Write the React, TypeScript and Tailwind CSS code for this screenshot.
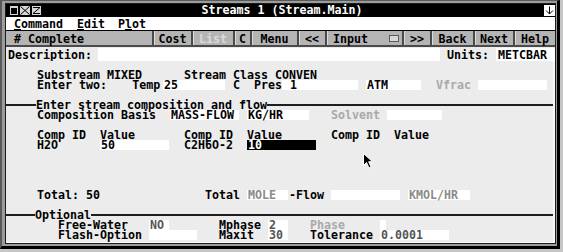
import React from "react";

const CW = 7;

type SegProps = { c: number; children?: React.ReactNode; className?: string };

function Seg({ c, children, className = "" }: SegProps) {
  return (
    <span
      className={`block shrink-0 whitespace-pre leading-[10px] ${className}`}
      style={{ width: c * CW }}
    >
      {children}
    </span>
  );
}

type FieldProps = SegProps & { sel?: boolean };

function Field({ c, children, className = "", sel = false }: FieldProps) {
  return (
    <span
      className={`block h-[10px] shrink-0 whitespace-pre pl-[1px] leading-[10px] ${
        sel ? "bg-black text-white" : "bg-white"
      } ${className}`}
      style={{ width: c * CW - 1, marginRight: 1 }}
    >
      {children}
    </span>
  );
}

function Row({ children }: { children?: React.ReactNode }) {
  return <div className="flex h-[10px] items-center">{children}</div>;
}

function Blank() {
  return <div className="h-[10px]" />;
}

function Sep({ label, lead }: { label: string; lead: string }) {
  return (
    <div className="-ml-[31px] flex h-[10px] items-center">
      <div className={`h-[2px] bg-[#1e1e1e] ${lead}`} />
      <span className="whitespace-pre leading-[10px]">{label}</span>
      <div className="h-[2px] flex-1 bg-[#1e1e1e]" />
    </div>
  );
}

const grey = "text-[#a9a9a9]";
const dim = "text-[#8a8a8a]";
const val = "text-[#555555]";

function TitleBar() {
  return (
    <div className="flex h-[13px] items-center bg-black">
      <div className="flex flex-1 items-center pl-[3px]">
        <div className="flex h-[11px] w-[10px] items-center justify-center border border-black bg-[#d6d6d6]">
          <div className="h-[6px] w-[6px] bg-black" />
        </div>
        <div className="h-[11px] w-[12px] border border-black bg-[#d6d6d6]">
          <svg width="10" height="9" viewBox="0 0 10 9" className="block">
            <path d="M0.5 0.5 L9.5 8.5 M9.5 0.5 L0.5 8.5" stroke="#000" strokeWidth="1" />
          </svg>
        </div>
        <div className="flex h-[11px] w-[11px] items-center justify-center border border-black bg-[#d6d6d6]">
          <svg width="9" height="9" viewBox="0 0 9 9" className="block">
            <path d="M1 1.5 H8 L1 7.5 H8" stroke="#000" strokeWidth="1" fill="none" />
          </svg>
        </div>
      </div>
      <span className="whitespace-pre pt-[1px] leading-none text-white">Streams 1 (Stream.Main)</span>
      <div className="flex flex-1 justify-end">
        <div className="flex h-[11px] w-[11px] items-center justify-center bg-white">
          <svg width="9" height="9" viewBox="0 0 9 9" className="block">
            <path d="M4.5 0.5 V8 M1 4.5 L4.5 8 L8 4.5" stroke="#000" strokeWidth="1" fill="none" />
          </svg>
        </div>
      </div>
    </div>
  );
}

function MenuBar() {
  return (
    <div className="flex h-[13px] items-center bg-white pl-[8px] pt-[2px]">
      <span className="w-[63px] leading-none">
        <span className="underline underline-offset-[1px]">C</span>ommand
      </span>
      <span className="w-[41px] leading-none">
        <span className="underline underline-offset-[1px]">E</span>dit
      </span>
      <span className="leading-none">
        P<span className="underline underline-offset-[1px]">l</span>ot
      </span>
    </div>
  );
}

const buttons = [
  { t: "Cost", w: "w-[39px]" },
  { t: "List", w: "w-[42px]", dis: true },
  { t: "C", w: "w-[17px]" },
  { t: "Menu", w: "w-[47px]" },
  { t: "<<", w: "w-[28px]" },
  { t: "Input", w: "w-[77px]", input: true },
  { t: ">>", w: "w-[28px]" },
  { t: "Back", w: "w-[43px]" },
  { t: "Next", w: "w-[40px]" },
  { t: "Help", w: "w-[42px]" },
];

function Toolbar() {
  return (
    <div className="flex h-[17px] border-t border-b-2 border-t-black border-b-[#4a4a4a] bg-[#b4b4b4]">
      <div className="flex w-[146px] items-center pl-[8px] pt-[3px] leading-none">
        # Complete
      </div>
      {buttons.map((b) => (
        <div
          key={b.t}
          className={`flex h-full items-center border-l-2 border-l-[#4a4a4a] pt-[3px] leading-none shadow-[inset_1px_0_0_#dcdcdc] ${b.w} ${
            b.input ? "justify-between pl-[6px] pr-[3px]" : "justify-center"
          } ${b.dis ? "text-[#dadada]" : ""}`}
        >
          <span>{b.t}</span>
          {b.input && <span className="mb-[2px] block h-[7px] w-[10px] border border-[#5a5a5a] bg-[#d8d8d8]" />}
        </div>
      ))}
    </div>
  );
}

function DescRow() {
  return (
    <div className="flex h-[14px] bg-[#ececec] pt-[1px]">
      <span className="flex w-[92px] items-center pl-[2px] pt-[2px] leading-none">Description:</span>
      <span className="w-[342px] bg-white" />
      <span className="ml-[7px] flex w-[49px] items-center pt-[2px] leading-none">Units:</span>
      <span className="flex flex-1 items-center bg-white pl-[2px] pt-[2px] leading-none">METCBAR</span>
    </div>
  );
}

function Content() {
  return (
    <div className="flex-1 border-r-2 border-b border-r-[#f8f8f8] border-b-[#f8f8f8] bg-[#ececec] pl-[31px] pt-[9px]">
      <Row>
        <Seg c={21}>Substream MIXED</Seg>
        <Seg c={19}>Stream Class CONVEN</Seg>
      </Row>
      <Row>
        <Seg c={13.6}>Enter two:</Seg>
        <Seg c={4.4}>Temp</Seg>
        <Field c={9}>25</Field>
        <Seg c={1} />
        <Seg c={3}>C</Seg>
        <Seg c={4}>Pres</Seg>
        <Field c={11}> 1</Field>
        <Seg c={1} />
        <Field c={8}>ATM</Field>
        <Seg c={2} />
        <Seg c={6} className={grey}>
          Vfrac
        </Seg>
        <Field c={10} />
      </Row>
      <Blank />
      <Sep label="Enter stream composition and flow" lead="w-[30px]" />
      <Row>
        <Seg c={19}>Composition Basis</Seg>
        <Field c={10}>MASS-FLOW</Field>
        <Seg c={1} />
        <Field c={9}>KG/HR</Field>
        <Seg c={3} />
        <Seg c={8} className={grey}>
          Solvent
        </Seg>
        <Field c={8} />
      </Row>
      <Blank />
      <Row>
        <Seg c={9}>Comp ID</Seg>
        <Seg c={12}>Value</Seg>
        <Seg c={9}>Comp ID</Seg>
        <Seg c={12}>Value</Seg>
        <Seg c={9}>Comp ID</Seg>
        <Seg c={5}>Value</Seg>
      </Row>
      <Row>
        <Seg c={9}>H2O</Seg>
        <Field c={10}>50</Field>
        <Seg c={2} />
        <Seg c={9}>C2H6O-2</Seg>
        <Field c={10} sel>
          10
        </Field>
      </Row>
      <Blank />
      <Blank />
      <Blank />
      <Blank />
      <Row>
        <Seg c={24}>Total: 50</Seg>
        <Seg c={6}>Total</Seg>
        <Field c={6} className={dim}>
          MOLE
        </Field>
        <Seg c={6}>-Flow</Seg>
        <Field c={10} />
        <Seg c={1} />
        <Field c={9} className={dim}>
          KMOL/HR
        </Field>
      </Row>
      <Blank />
      <Sep label="Optional" lead="w-[29px]" />
      <Row>
        <Seg c={3} />
        <Seg c={13}>Free-Water</Seg>
        <Field c={3} className={val}>
          NO
        </Field>
        <Seg c={7} />
        <Seg c={7}>Mphase</Seg>
        <Field c={3} className={val}>
          2
        </Field>
        <Seg c={3} />
        <Seg c={10} className={grey}>
          Phase
        </Seg>
        <Field c={1} />
      </Row>
      <Row>
        <Seg c={3} />
        <Seg c={13}>Flash-Option</Seg>
        <Field c={7} />
        <Seg c={3} />
        <Seg c={7}>Maxit</Seg>
        <Field c={3} className={val}>
          30
        </Field>
        <Seg c={3} />
        <Seg c={10}>Tolerance</Seg>
        <Field c={10} className={val}>
          0.0001
        </Field>
      </Row>
    </div>
  );
}

function Cursor() {
  return (
    <svg
      className="absolute left-[363px] top-[153px]"
      width="12"
      height="17"
      viewBox="0 0 12 17"
    >
      <path
        d="M0.5 0.5 L0.5 12.5 L3.5 9.5 L6 15 L8 14 L5.7 8.7 L9.5 8.7 Z"
        fill="#000"
        stroke="#fff"
        strokeWidth="1"
      />
    </svg>
  );
}

export default function App() {
  return (
    <div className="relative h-[252px] w-[563px] overflow-hidden bg-[#c6c6c6] font-['DejaVu_Sans_Mono',monospace] text-[11.63px] font-bold text-black">
      <div className="h-[249px] w-[560px] border-l-2 border-t border-r-[3px] border-b-[3px] border-l-[#5a5a5a] border-t-[#5a5a5a] border-r-black border-b-black bg-[#9c9c9c] pb-[2px] pl-[3px] pr-[1px] pt-[2px]">
        <div className="flex h-full flex-col border border-[#1c1c1c]">
          <TitleBar />
          <MenuBar />
          <Toolbar />
          <DescRow />
          <Content />
        </div>
      </div>
      <Cursor />
    </div>
  );
}
